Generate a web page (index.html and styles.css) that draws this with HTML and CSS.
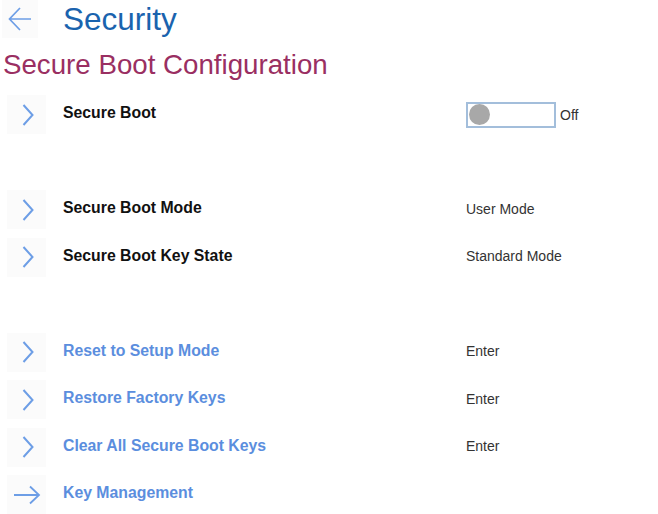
FILE: index.html
```html
<!DOCTYPE html>
<html>
<head>
<meta charset="utf-8">
<link rel="stylesheet" href="styles.css">
</head>
<body>
<div class="page">
  <header class="topbar">
    <div class="iconbox back">
      <svg width="26" height="32" viewBox="0 0 26 32"><path d="M24 16H3M13 5L2.5 16L13 27" fill="none" stroke="#6d9ee6" stroke-width="1.7"/></svg>
    </div>
    <h1 class="title">Security</h1>
  </header>
  <h2 class="subtitle">Secure Boot Configuration</h2>

  <div class="list">
    <div class="row">
      <div class="iconbox"><svg class="chev" width="12" height="22" viewBox="0 0 12 22"><path d="M1.5 1L10.5 11L1.5 21" fill="none" stroke="#6d9ee6" stroke-width="2"/></svg></div>
      <div class="label">Secure Boot</div>
      <div class="value toggle-wrap">
        <div class="toggle"><span class="knob"></span></div>
        <span class="toggle-text">Off</span>
      </div>
    </div>
    <div class="row spacer"></div>
    <div class="row">
      <div class="iconbox"><svg class="chev" width="12" height="22" viewBox="0 0 12 22"><path d="M1.5 1L10.5 11L1.5 21" fill="none" stroke="#6d9ee6" stroke-width="2"/></svg></div>
      <div class="label">Secure Boot Mode</div>
      <div class="value">User Mode</div>
    </div>
    <div class="row">
      <div class="iconbox"><svg class="chev" width="12" height="22" viewBox="0 0 12 22"><path d="M1.5 1L10.5 11L1.5 21" fill="none" stroke="#6d9ee6" stroke-width="2"/></svg></div>
      <div class="label">Secure Boot Key State</div>
      <div class="value">Standard Mode</div>
    </div>
    <div class="row spacer"></div>
    <div class="row">
      <div class="iconbox"><svg class="chev" width="12" height="22" viewBox="0 0 12 22"><path d="M1.5 1L10.5 11L1.5 21" fill="none" stroke="#6d9ee6" stroke-width="2"/></svg></div>
      <div class="label link">Reset to Setup Mode</div>
      <div class="value">Enter</div>
    </div>
    <div class="row">
      <div class="iconbox"><svg class="chev" width="12" height="22" viewBox="0 0 12 22"><path d="M1.5 1L10.5 11L1.5 21" fill="none" stroke="#6d9ee6" stroke-width="2"/></svg></div>
      <div class="label link">Restore Factory Keys</div>
      <div class="value">Enter</div>
    </div>
    <div class="row">
      <div class="iconbox"><svg class="chev" width="12" height="22" viewBox="0 0 12 22"><path d="M1.5 1L10.5 11L1.5 21" fill="none" stroke="#6d9ee6" stroke-width="2"/></svg></div>
      <div class="label link">Clear All Secure Boot Keys</div>
      <div class="value">Enter</div>
    </div>
    <div class="row">
      <div class="iconbox"><svg width="28" height="20" viewBox="0 0 28 20"><path d="M1 10H26M17 1.5L26 10L17 18.5" fill="none" stroke="#6d9ee6" stroke-width="1.8"/></svg></div>
      <div class="label link">Key Management</div>
      <div class="value"></div>
    </div>
  </div>
</div>
</body>
</html>
```

FILE: styles.css
```css
html, body {
  margin: 0;
  padding: 0;
  background: #ffffff;
  font-family: "Liberation Sans", Arial, sans-serif;
}

.page {
  width: 658px;
  height: 514px;
  overflow: hidden;
}

.topbar {
  display: flex;
  align-items: center;
  height: 38px;
  padding-left: 2px;
}

.iconbox {
  width: 39px;
  height: 39px;
  background: #fbfbfb;
  display: flex;
  align-items: center;
  justify-content: center;
  flex: none;
}

.back {
  width: 36px;
  height: 38px;
  margin-right: 25px;
}

.title {
  margin: 0;
  font-size: 31.5px;
  font-weight: normal;
  color: #1a63ae;
  line-height: 38px;
}

.subtitle {
  margin: 7px 0 0 3px;
  font-size: 27.7px;
  font-weight: normal;
  color: #9a2f62;
  line-height: 40px;
}

.list {
  margin-top: 6px;
  display: flex;
  flex-direction: column;
}

.row {
  display: grid;
  grid-template-columns: 39px 386px 1fr;
  align-items: center;
  column-gap: 17px;
  height: 47.5px;
  padding-left: 7px;
}

.chev {
  margin-left: 2px;
}

.label {
  font-size: 15.8px;
  font-weight: bold;
  color: #111111;
  margin-top: -3px;
}

.label.link {
  color: #5b8ede;
}

.value {
  font-size: 14px;
  color: #333333;
  margin-top: -2px;
}

.toggle-wrap {
  display: flex;
  align-items: center;
  gap: 4px;
  margin-top: 0;
}

.toggle {
  width: 85px;
  height: 22px;
  border: 2px solid #a3bedb;
  display: flex;
  align-items: center;
  padding-left: 1px;
  box-sizing: content-box;
}

.knob {
  width: 21px;
  height: 21px;
  border-radius: 50%;
  background: #a8a8a8;
}

.toggle-text {
  font-size: 14px;
  color: #333333;
}
```
